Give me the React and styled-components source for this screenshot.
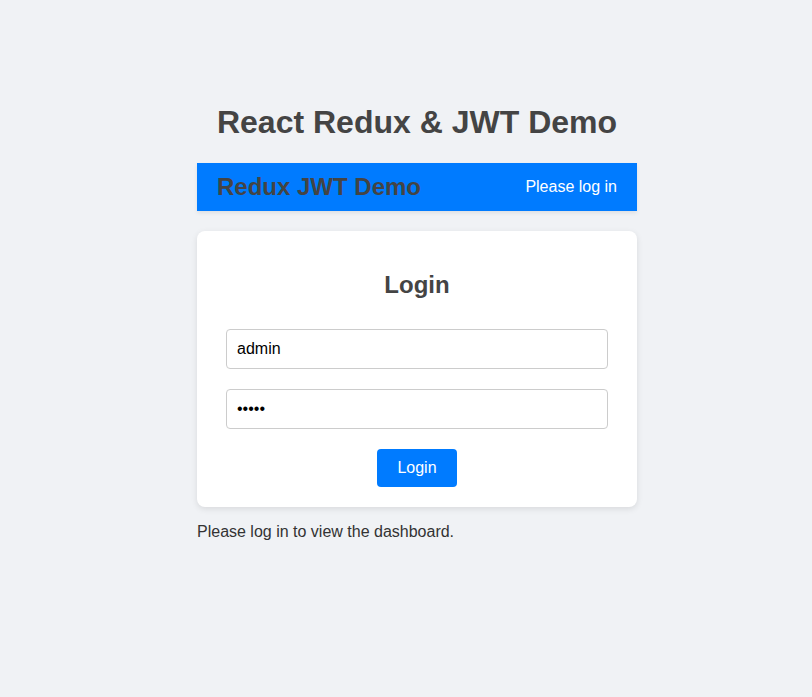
import React from 'react'
import styled, { createGlobalStyle } from 'styled-components'

const GlobalStyle = createGlobalStyle`
  html, body {
    margin: 0;
    padding: 0;
    background: #f0f2f5;
    font-family: "Liberation Sans", Arial, sans-serif;
    color: #444;
  }

  body {
    padding-left: 22px;
  }
`

const Page = styled.div`
  width: 440px;
  margin: 0 auto;
  padding-top: 104px;
`

const Title = styled.h1`
  margin: 0 0 22px;
  font-size: 32px;
  line-height: 37px;
  font-weight: bold;
  text-align: center;
  color: #444;
`

const Header = styled.header`
  display: flex;
  align-items: center;
  justify-content: space-between;
  height: 48px;
  padding: 0 20px;
  background: #007bff;
  box-shadow: 0 2px 4px rgba(0, 0, 0, 0.08);
`

const Brand = styled.div`
  font-size: 24px;
  font-weight: bold;
  color: #444;
`

const Status = styled.span`
  font-size: 16px;
  color: #fff;
`

const Card = styled.div`
  margin-top: 20px;
  padding: 40px 29px 20px;
  background: #fff;
  border-radius: 8px;
  box-shadow: 0 2px 6px rgba(0, 0, 0, 0.1);
`

const CardTitle = styled.h2`
  margin: 0 0 30px;
  font-size: 24px;
  line-height: 28px;
  font-weight: bold;
  text-align: center;
  color: #444;
`

const Form = styled.form`
  display: flex;
  flex-direction: column;
  align-items: center;
  gap: 20px;
`

const Input = styled.input`
  box-sizing: border-box;
  width: 100%;
  height: 40px;
  padding: 0 10px;
  border: 1px solid #ccc;
  border-radius: 4px;
  font: 16px "Liberation Sans", Arial, sans-serif;
  color: #000;
  outline: none;
`

const Button = styled.button`
  width: 80px;
  height: 38px;
  border: 0;
  border-radius: 4px;
  background: #007bff;
  color: #fff;
  font: 16px "Liberation Sans", Arial, sans-serif;
  cursor: pointer;
`

const Note = styled.p`
  margin: 16px 0 0;
  font-size: 16px;
  line-height: 18px;
  color: #333;
`

const App = () => (
  <>
    <GlobalStyle />
    <Page>
      <Title>React Redux &amp; JWT Demo</Title>
      <Header>
        <Brand>Redux JWT Demo</Brand>
        <Status>Please log in</Status>
      </Header>
      <Card>
        <CardTitle>Login</CardTitle>
        <Form onSubmit={e => e.preventDefault()}>
          <Input type="text" defaultValue="admin" />
          <Input type="password" defaultValue="admin" />
          <Button type="submit">Login</Button>
        </Form>
      </Card>
      <Note>Please log in to view the dashboard.</Note>
    </Page>
  </>
)

export default App
